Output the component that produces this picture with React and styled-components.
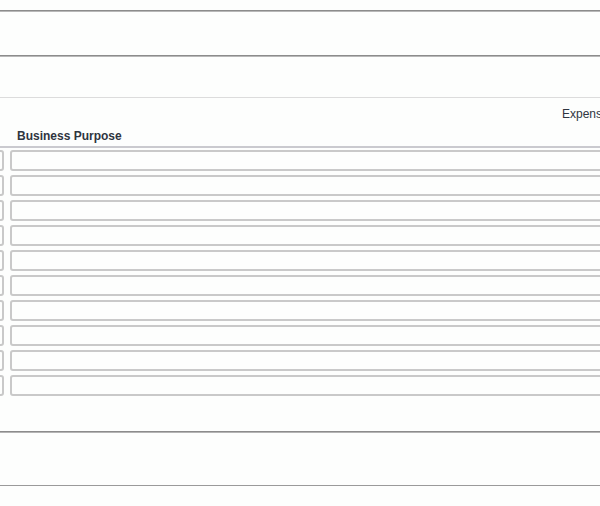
import styled, { createGlobalStyle } from 'styled-components';

const GlobalStyle = createGlobalStyle`
  html, body {
    margin: 0;
    padding: 0;
    background: #fdfefd;
    overflow: hidden;
  }
  body {
    font-family: "Liberation Sans", Arial, sans-serif;
  }
`;

const Page = styled.div`
  width: 600px;
  height: 506px;
  overflow: hidden;
  padding-top: 10px;
  box-sizing: border-box;
`;

const Band = styled.div`
  height: ${p => p.$height}px;
  border-top: 1px solid #8c8c8c;
  box-shadow: inset 0 1px 0 #b8b8b8;
`;

const Section = styled.div`
  border-top: 1px solid #dcdcdc;
`;

const HeaderTop = styled.div`
  height: 12px;
  margin-top: 10px;
  padding-left: 562px;
  font-size: 12px;
  line-height: 12px;
  color: #2f3540;
  white-space: nowrap;
`;

const HeaderLabel = styled.div`
  margin-top: 9px;
  margin-bottom: 3px;
  padding-left: 17px;
  font-size: 12px;
  font-weight: bold;
  line-height: 14px;
  color: #2f3540;
  white-space: nowrap;
`;

const HeaderRule = styled.div`
  height: 2px;
  background: #cacacf;
  margin-bottom: 2px;
`;

const Rows = styled.div`
  display: flex;
  flex-direction: column;
  gap: 4px;
  margin-left: -30px;
  width: 700px;
  padding-bottom: 35px;
`;

const Row = styled.div`
  display: grid;
  grid-template-columns: 34px 1fr;
  column-gap: 6px;
`;

const Field = styled.div`
  height: 21px;
  box-sizing: border-box;
  border: 2px solid #c9c9c9;
  border-radius: 3px;
  background: #fdfefd;
`;

const Footer = styled.div`
  height: 53px;
  border-top: 1px solid #8c8c8c;
  box-shadow: inset 0 1px 0 #b4b4b4;
  border-bottom: 1px solid #9a9a9a;
`;

export default function App() {
  const rows = Array.from({ length: 10 }, (_, i) => i);
  return (
    <>
      <GlobalStyle />
      <Page>
        <Band $height={44} />
        <Band $height={41} />
        <Section>
          <HeaderTop>Expense Type</HeaderTop>
          <HeaderLabel>Business Purpose</HeaderLabel>
          <HeaderRule />
          <Rows>
            {rows.map(i => (
              <Row key={i}>
                <Field />
                <Field />
              </Row>
            ))}
          </Rows>
        </Section>
        <Footer />
      </Page>
    </>
  );
}
